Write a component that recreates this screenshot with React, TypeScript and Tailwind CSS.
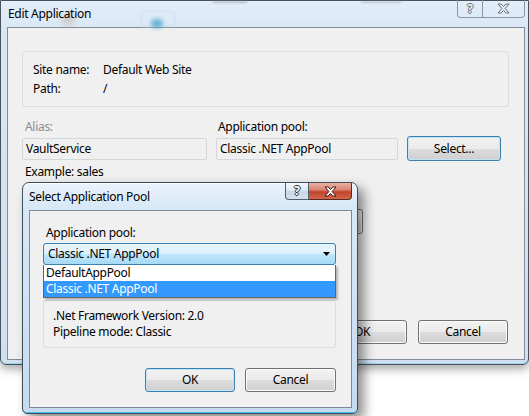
import clsx from "clsx";

function WinButton({
  label,
  active,
  className,
}: {
  label?: string;
  active?: boolean;
  className: string;
}) {
  return (
    <button
      type="button"
      className={clsx(
        "flex items-center justify-center rounded-[3px] border bg-[linear-gradient(#f2f2f2_0%,#ebebeb_50%,#dddddd_51%,#cfcfcf_100%)] leading-none",
        active
          ? "border-[#3c7fb1] shadow-[inset_0_0_0_1px_#bfe6f8]"
          : "border-[#707070] shadow-[inset_0_0_0_1px_#fbfbfb]",
        className
      )}
    >
      {label}
    </button>
  );
}

// close / help buttons in the caption bar
function CaptionButtons({ active, className }: { active: boolean; className: string }) {
  if (active) {
    return (
      <div className={clsx("absolute flex h-[17px]", className)}>
        <div className="flex h-full w-[24px] items-center justify-center rounded-bl-[4px] border border-t-0 border-[#52606e] bg-[linear-gradient(#f4f8fc_0%,#dfe8f1_45%,#c6d5e4_55%,#d6e2ee_100%)]">
          <span className="text-[12px] font-bold leading-none text-white [text-shadow:1px_0_#303030,-1px_0_#303030,0_1px_#303030,0_-1px_#303030]">
            ?
          </span>
        </div>
        <div className="flex h-full w-[43px] items-center justify-center rounded-br-[4px] border border-l-0 border-t-0 border-[#5a2a22] bg-[linear-gradient(#eab0a3_0%,#d98574_42%,#c2442b_55%,#d3654b_100%)]">
          <svg width="13" height="11" viewBox="0 0 13 11">
            <path
              d="M1 1H4.2L6.5 3.6L8.8 1H12L8.1 5.5L12 10H8.8L6.5 7.4L4.2 10H1L4.9 5.5Z"
              fill="#fff"
              stroke="#3b1c16"
              strokeWidth="1"
              strokeLinejoin="round"
            />
          </svg>
        </div>
      </div>
    );
  }
  return (
    <div className={clsx("absolute flex h-[18px]", className)}>
      <div className="flex h-full w-[26px] items-center justify-center rounded-bl-[4px] border border-t-0 border-[#8a98a6]">
        <span className="text-[12px] font-bold leading-none text-[#e6eef6] [text-shadow:1px_0_#6f6f6f,-1px_0_#6f6f6f,0_1px_#6f6f6f,0_-1px_#6f6f6f]">
          ?
        </span>
      </div>
      <div className="flex h-full w-[42px] items-center justify-center rounded-br-[4px] border border-l-0 border-t-0 border-[#8a98a6]">
        <svg width="13" height="11" viewBox="0 0 13 11">
          <path
            d="M1 1H4.2L6.5 3.6L8.8 1H12L8.1 5.5L12 10H8.8L6.5 7.4L4.2 10H1L4.9 5.5Z"
            fill="#e6eef6"
            stroke="#6f6f6f"
            strokeWidth="1"
            strokeLinejoin="round"
          />
        </svg>
      </div>
    </div>
  );
}

function TextBox({ value, className }: { value?: string; className: string }) {
  return (
    <div
      className={clsx(
        "flex h-[22px] items-center rounded-[2px] border border-[#d3d8dd] pl-[3px]",
        className
      )}
    >
      {value}
    </div>
  );
}

function EditApplication() {
  return (
    <div className="absolute left-0 top-0 flex h-[365px] w-[529px] flex-col rounded-b-[6px] border border-[#4a535c] bg-[linear-gradient(180deg,#e2eefa_0%,#d9e7f5_30px,#cfe0f0_100%)] shadow-[inset_0_-1px_0_#9fd3ee,0_4px_10px_rgba(0,0,0,0.35)]">
      {/* caption with a blurred desktop behind the glass */}
      <div className="relative flex h-[26px] items-center pl-[7px]">
        <div className="absolute left-[60px] top-[14px] h-[10px] w-[14px] rounded-full bg-[#b59a74] opacity-40 blur-[3px]" />
        <div className="absolute left-[140px] top-[10px] h-[16px] w-[34px] rounded-[2px] border border-[#c5d3e0] opacity-70 blur-[1px]" />
        <div className="absolute left-[150px] top-[18px] h-[9px] w-[12px] rounded-full bg-[#3b9cc4] opacity-70 blur-[2px]" />
        <div className="absolute left-[212px] top-0 h-[2px] w-[34px] bg-[#8a8f95] opacity-50 blur-[1px]" />
        <div className="absolute left-[360px] top-0 h-[2px] w-[40px] bg-[#8a8f95] opacity-40 blur-[1px]" />
        <span className="relative">Edit Application</span>
        <CaptionButtons active={false} className="right-[3px] top-[-1px]" />
      </div>

      <div className="mb-[4px] ml-[6px] mr-[3px] flex flex-1 flex-col border border-[#828d99] bg-[#f0f0f0] pb-[15px] pl-[14px] pr-[15px] pt-[23px]">
        <div className="h-[56px] rounded-[3px] border border-[#d5dfe5] pl-[10px] pt-[8px]">
          <div className="grid grid-cols-[70px_1fr] leading-[19px]">
            <span>Site name:</span>
            <span>Default Web Site</span>
            <span>Path:</span>
            <span>/</span>
          </div>
        </div>

        <div className="mt-[12px] flex leading-[16px]">
          <span className="w-[194px] pl-[3px] text-[#8d8d8d]">Alias:</span>
          <span className="pl-[2px]">Application pool:</span>
        </div>
        <div className="mt-[1px] flex h-[25px] items-center gap-[9px]">
          <TextBox value="VaultService" className="w-[185px]" />
          <TextBox value="Classic .NET AppPool" className="w-[182px]" />
          <WinButton label="Select..." active className="h-[25px] w-[94px]" />
        </div>
        <div className="mt-[3px] pl-[3px] leading-[16px]">Example: sales</div>

        {/* physical path row, mostly covered by the pool dialog */}
        <div className="mt-[29px] flex h-[25px] items-center gap-[6px]">
          <TextBox className="w-[304px] bg-white" />
          <WinButton className="h-[25px] w-[31px]" />
        </div>

        <div className="mt-auto flex justify-end gap-[11px] pr-[1px]">
          <WinButton label="OK" className="h-[24px] w-[90px]" />
          <WinButton label="Cancel" className="h-[24px] w-[90px]" />
        </div>
      </div>
    </div>
  );
}

function SelectPool() {
  return (
    <div className="absolute left-[22px] top-[182px] flex h-[232px] w-[336px] flex-col rounded-b-[5px] rounded-t-[7px] border border-[#3f4d5b] bg-[linear-gradient(180deg,#eaf3fc_0%,#d7e7f6_26px,#c6dbf0_100%)] shadow-[inset_0_-1px_0_#3fbdee,inset_0_1px_0_#ffffff,6px_6px_12px_rgba(0,0,0,0.45)]">
      <div className="relative flex h-[27px] items-center pl-[6px]">
        <span>Select Application Pool</span>
        <CaptionButtons active className="right-[5px] top-0" />
      </div>

      <div className="mb-[5px] ml-[6px] mr-[5px] flex flex-1 flex-col border border-[#7d8996] bg-[#f0f0f0] pl-[13px] pr-[15px] pt-[14px]">
        <div className="pl-[3px] leading-[16px]">Application pool:</div>

        <div className="relative z-10 mt-[2px]">
          <div className="flex h-[22px] items-center justify-between rounded-[3px] border border-[#3c7fb1] bg-[linear-gradient(#eaf6fd_0%,#d9f0fc_50%,#bee6fd_51%,#a7d9f5_100%)] pl-[4px] pr-[5px]">
            <span>Classic .NET AppPool</span>
            <svg width="7" height="4" viewBox="0 0 7 4">
              <path d="M0 0H7L3.5 4Z" fill="#000" />
            </svg>
          </div>
          {/* open drop-down list */}
          <div className="absolute left-0 top-full w-full border border-t-0 border-[#646464] bg-white shadow-[2px_2px_2px_rgba(0,0,0,0.25)]">
            <div className="flex h-[16px] items-center pl-[2px]">DefaultAppPool</div>
            <div className="flex h-[16px] items-center bg-[#3399ff] pl-[2px] text-white">
              Classic .NET AppPool
            </div>
          </div>
        </div>

        <div className="mt-[35px] h-[48px] rounded-[3px] border border-[#d5dfe5] pl-[9px] pt-[7px] leading-[16px]">
          <div>.Net Framework Version: 2.0</div>
          <div>Pipeline mode: Classic</div>
        </div>

        <div className="mt-[20px] flex justify-end gap-[10px]">
          <WinButton label="OK" active className="h-[24px] w-[90px]" />
          <WinButton label="Cancel" className="h-[24px] w-[91px]" />
        </div>
      </div>
    </div>
  );
}

export default function App() {
  return (
    <div className="relative h-[416px] w-[529px] overflow-hidden bg-white font-['Noto_Sans',sans-serif] text-[12px] leading-none tracking-[-0.3px] text-black">
      <EditApplication />
      <SelectPool />
    </div>
  );
}
